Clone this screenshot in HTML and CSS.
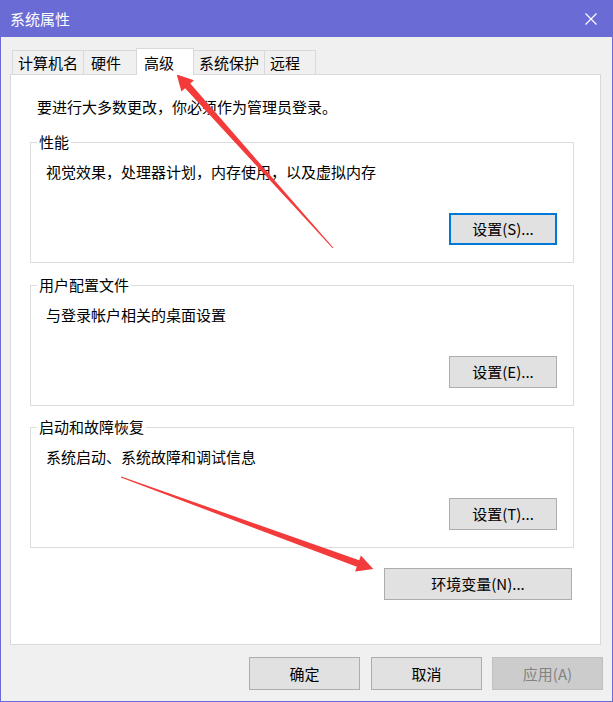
FILE: index.html
```html
<!DOCTYPE html>
<html lang="zh-CN">
<head>
<meta charset="utf-8">
<title>系统属性</title>
<link rel="stylesheet" href="styles.css">
</head>
<body>
<div class="window">
  <div class="titlebar">
    <span class="title">系统属性</span>
    <svg class="close" width="12" height="12" viewBox="0 0 12 12"><path d="M0.5 0.5 L11.5 11.5 M11.5 0.5 L0.5 11.5" stroke="#fff" stroke-width="1.2" fill="none"/></svg>
  </div>
  <div class="content">
    <div class="tabs">
      <div class="tab">计算机名</div>
      <div class="tab tab-hw">硬件</div>
      <div class="tab tab-active">高级</div>
      <div class="tab">系统保护</div>
      <div class="tab tab-remote">远程</div>
    </div>
    <div class="panel">
      <p class="intro">要进行大多数更改，你必须作为管理员登录。</p>
      <fieldset class="group">
        <legend>性能</legend>
        <p class="desc">视觉效果，处理器计划，内存使用，以及虚拟内存</p>
        <div class="btn-row"><button class="btn btn-set btn-focus">设置(S)...</button></div>
      </fieldset>
      <fieldset class="group group-2">
        <legend>用户配置文件</legend>
        <p class="desc">与登录帐户相关的桌面设置</p>
        <div class="btn-row"><button class="btn btn-set">设置(E)...</button></div>
      </fieldset>
      <fieldset class="group group-3">
        <legend>启动和故障恢复</legend>
        <p class="desc">系统启动、系统故障和调试信息</p>
        <div class="btn-row"><button class="btn btn-set">设置(T)...</button></div>
      </fieldset>
      <div class="env-row"><button class="btn btn-env">环境变量(N)...</button></div>
    </div>
    <div class="footer">
      <button class="btn btn-foot">确定</button>
      <button class="btn btn-foot btn-cancel">取消</button>
      <button class="btn btn-foot btn-disabled">应用(A)</button>
    </div>
  </div>
</div>
<svg class="arrows" width="613" height="702" viewBox="0 0 613 702">
  <polygon fill="#f33b3b" points="333.4,247.7 190.3,83.6 194.0,80.2 176.7,74.5 181.4,91.6 185.1,88.2 332.6,248.3"/>
  <polygon fill="#f33b3b" points="120.8,477.5 356.8,566.8 355.1,571.5 373.3,569 360.9,555.5 359.2,560.2 121.2,476.5"/>
</svg>
</body>
</html>
```

FILE: styles.css
```css
* { box-sizing: border-box; }
html, body { margin: 0; padding: 0; }
body {
  position: relative;
  width: 613px;
  height: 702px;
  font-family: "Noto Sans CJK SC", "Microsoft YaHei", "Noto Sans", sans-serif;
  font-size: 15px;
  color: #000;
  background: #f0f0f0;
  overflow: hidden;
}
.window {
  width: 613px;
  height: 702px;
  border: 1px solid #6b6bd6;
  border-top: 0;
  background: #f0f0f0;
  display: flex;
  flex-direction: column;
}
.titlebar {
  height: 37px;
  background: #6b6bd6;
  display: flex;
  align-items: center;
  justify-content: space-between;
  padding: 0 15px 0 9px;
  flex: none;
}
.title {
  color: #fff;
  font-size: 15px;
  line-height: 20px;
}
.close { display: block; }
.content {
  padding-top: 11px;
  display: flex;
  flex-direction: column;
}
.tabs {
  display: flex;
  align-items: flex-end;
  height: 27px;
  margin-left: 11px;
  margin-bottom: -1px;
  position: relative;
  z-index: 1;
}
.tab {
  height: 24px;
  margin-bottom: 1px;
  border: 1px solid #d9d9d9;
  border-bottom: 0;
  background: #f0f0f0;
  padding: 0 5px;
  line-height: 23px;
  white-space: nowrap;
  margin-left: -1px;
}
.tab:first-child { margin-left: 0; }
.tab-hw { width: 54px; padding-left: 7px; }
.tab-remote { width: 52px; padding-left: 5px; }
.tab-active {
  width: 58px;
  height: 27px;
  margin-bottom: 0;
  padding-left: 7px;
  background: #fff;
  line-height: 27px;
}
.panel {
  margin-left: 9px;
  width: 591px;
  height: 571px;
  border: 1px solid #d9d9d9;
  background: #fff;
  padding: 22px 0 0 19px;
}
.intro {
  margin: 0 0 15px 7px;
  line-height: 20px;
}
.group {
  margin: 0;
  width: 544px;
  min-width: 0;
  border: 1px solid #dcdcdc;
  padding: 10px 16px 17px 6px;
}
.group-2 { margin-top: 12px; }
.group-3 { margin-top: 11px; }
.group legend {
  padding: 0 2px;
  line-height: 20px;
}
.desc {
  margin: 0 0 0 9px;
  line-height: 20px;
}
.btn-row {
  display: flex;
  justify-content: flex-end;
  margin-top: 31px;
}
.btn {
  font-family: inherit;
  font-size: 15px;
  color: #000;
  background: #e1e1e1;
  border: 1px solid #adadad;
  margin: 0;
  padding: 0;
  line-height: 20px;
}
.btn-set { width: 108px; height: 32px; }
.btn-focus { border: 2px solid #0078d7; }
.env-row {
  width: 544px;
  display: flex;
  justify-content: flex-end;
  padding-right: 2px;
  margin-top: 20px;
}
.btn-env { width: 188px; height: 32px; }
.footer {
  display: flex;
  justify-content: flex-end;
  padding-right: 9px;
  margin-top: 12px;
}
.btn-foot { width: 111px; height: 33px; }
.btn-cancel { margin-left: 11px; }
.btn-disabled {
  margin-left: 10px;
  background: #cccccc;
  border-color: #bfbfbf;
  color: #838383;
}
.arrows {
  position: absolute;
  left: 0;
  top: 0;
  pointer-events: none;
}
```
